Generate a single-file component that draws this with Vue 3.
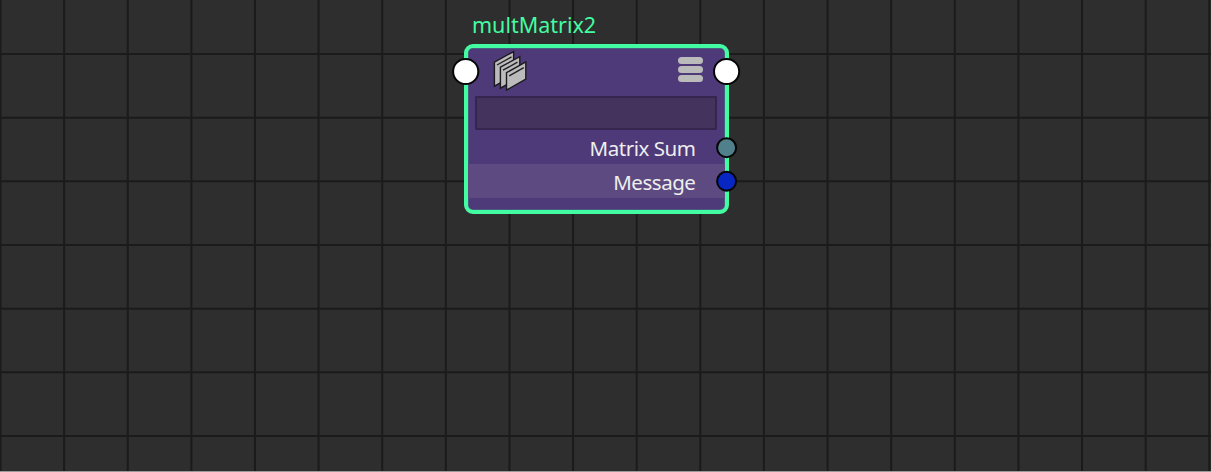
<script setup>
const columns = Array.from({ length: 20 }, (_, i) => 0.5 + i * 63.62)
const rows = Array.from({ length: 7 }, (_, i) => 54 + i * 63.67)
const outputs = [
  { label: 'Matrix Sum', kind: 'matrix' },
  { label: 'Message', kind: 'message' },
]
</script>

<template>
  <main class="canvas">
    <svg class="grid" width="1211" height="472" aria-hidden="true">
      <line v-for="x in columns" :key="'c' + x" :x1="x" y1="0" :x2="x" y2="472" />
      <line v-for="y in rows" :key="'r' + y" x1="0" :y1="y" x2="1211" :y2="y" />
    </svg>

    <div class="title">multMatrix2</div>
    <section class="node">
      <header class="header">
        <svg class="stack" width="36" height="42" viewBox="492 50 36 42">
          <path class="sheet" d="M494.4 62.1 513.6 51.6V75.5L494.4 86.2Z" />
          <path class="mark" d="M497 65 511.5 56.9" />
          <path class="sheet" d="M500.4 67.2 519.8 56.6V77.4L500.4 88.2Z" />
          <path class="mark" d="M503 70.2 517.5 62.2" />
          <path class="sheet" d="M506.5 72.7 525.8 61.9V79.2L506.5 90.1Z" />
          <path class="mark" d="M509.2 75.8 523.8 67.6" />
        </svg>
        <div class="menu"><i></i><i></i><i></i></div>
      </header>
      <div class="field"></div>
      <div v-for="o in outputs" :key="o.kind" class="row" :class="o.kind">
        <span class="label">{{ o.label }}</span>
      </div>
    </section>
    <svg class="ports" width="300" height="180" viewBox="450 40 300 180">
      <circle class="white" cx="465.7" cy="71.5" r="12.6" />
      <circle class="white" cx="726.6" cy="71.5" r="12.6" />
      <circle class="teal" cx="726.6" cy="147.7" r="9.5" />
      <circle class="blue" cx="726.6" cy="181.2" r="9.5" />
    </svg>
    <div class="edge"></div>
  </main>
</template>

<style>
body { margin: 0; overflow: hidden; }
</style>

<style scoped>
.canvas {
  position: relative;
  width: 1211px;
  height: 472px;
  overflow: hidden;
  background: #2e2e2e;
  font-family: "Noto Sans", "Open Sans", sans-serif;
  font-size: 20.5px;
}
.grid { position: absolute; inset: 0; }
.grid line { stroke: #1b1b1b; stroke-width: 2; }
.title {
  position: absolute;
  left: 472px;
  top: 10px;
  line-height: 30px;
  font-size: 21.5px;
  white-space: nowrap;
  color: #43fca2;
}
.node {
  position: absolute;
  left: 464px;
  top: 44px;
  box-sizing: border-box;
  width: 265px;
  height: 170px;
  border: 4px solid #43fca2;
  border-radius: 9px;
  background: #4f3a79;
  box-shadow: inset 0 0 0 0.5px #437e85;
}
.header {
  display: flex;
  justify-content: space-between;
  height: 48px;
  padding: 0 22px 0 24px;
}
.stack { margin-top: 2px; }
.sheet { fill: #bbb; stroke: #1c1a20; stroke-width: 1.4; }
.mark { stroke: #222; stroke-width: 1.4; }
.menu { display: flex; flex-direction: column; gap: 2px; padding-top: 9px; }
.menu i { width: 25px; height: 7px; border-radius: 3.5px; background: #bbb; }
.field {
  box-sizing: border-box;
  height: 34px;
  margin: 0 8px 0 7px;
  border: 2px solid #36264f;
  border-radius: 1px;
  background: #44335c;
}
.row {
  box-sizing: border-box;
  display: flex;
  align-items: center;
  justify-content: flex-end;
  height: 34px;
  padding: 2px 29.5px 0 0;
  color: #eee;
}
.message { background: #5d4a80; }
.label { white-space: nowrap; letter-spacing: -0.45px; }
.ports { position: absolute; left: 450px; top: 40px; }
.ports circle { stroke: #050505; stroke-width: 2; }
.white { fill: #fff; }
.teal { fill: #50808c; }
.blue { fill: #0726c2; }
.edge { position: absolute; left: 0; right: 0; bottom: 0; height: 1px; background: #9a9a9a; }
</style>
